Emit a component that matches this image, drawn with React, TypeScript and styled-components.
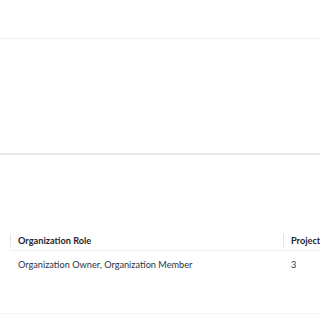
import React from "react";
import styled, { createGlobalStyle } from "styled-components";

const Global = createGlobalStyle`
  html, body { margin: 0; padding: 0; background: #ffffff; }
  body { font-family: Lato, "Open Sans", sans-serif; overflow: hidden; }
`;

const Page = styled.div`
  width: 320px;
  height: 320px;
  display: flex;
  flex-direction: column;
  overflow: hidden;
`;

const TopBar = styled.div`
  height: 38px;
  border-bottom: 1px solid #efefef;
  flex-shrink: 0;
`;

const Section = styled.div`
  height: 114px;
  border-bottom: 2px solid #e6eaea;
  flex-shrink: 0;
`;

const TableWrap = styled.div`
  padding-top: 76px;
  padding-left: 10px;
  flex-shrink: 0;
`;

const Table = styled.div`
  display: grid;
  grid-template-columns: 273px 120px;
  width: 393px;
`;

const HeadCell = styled.div`
  height: 19px;
  display: flex;
  align-items: center;
  padding-left: 8px;
  font-size: 9.2px;
  font-weight: 700;
  color: #1d2630;
  border-bottom: 1px solid #eeeeee;
  position: relative;
  white-space: nowrap;
  &::before {
    content: "";
    position: absolute;
    left: 0;
    top: 3px;
    bottom: 3px;
    width: 1px;
    background: #e4e4e4;
  }
`;

const BodyCell = styled.div`
  height: 26px;
  display: flex;
  align-items: center;
  padding-left: 8px;
  font-size: 9.2px;
  color: #2c3440;
  white-space: nowrap;
`;

const Footer = styled.div`
  margin-top: 36px;
  border-bottom: 1px solid #f5f5f5;
`;

export default function App() {
  return (
    <>
      <Global />
      <Page>
        <TopBar />
        <Section />
        <TableWrap>
          <Table>
            <HeadCell>Organization Role</HeadCell>
            <HeadCell>Projects</HeadCell>
            <BodyCell>Organization Owner, Organization Member</BodyCell>
            <BodyCell>3</BodyCell>
          </Table>
        </TableWrap>
        <Footer />
      </Page>
    </>
  );
}
